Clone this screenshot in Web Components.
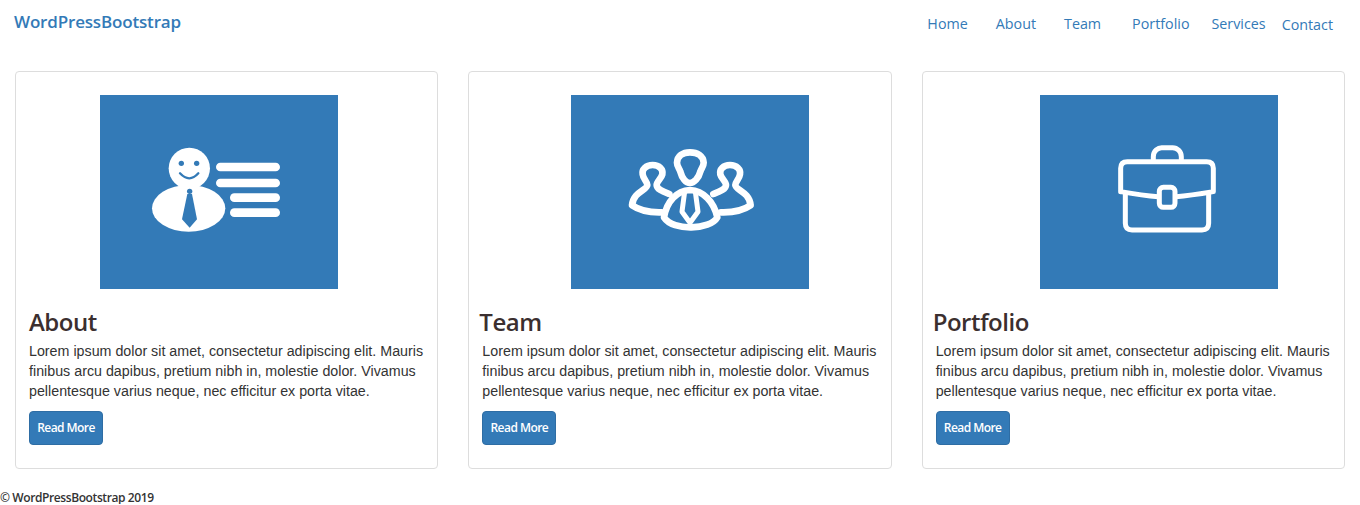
<!DOCTYPE html>
<html lang="en">
<head>
<meta charset="utf-8">
<title>WordPressBootstrap</title>
<style>
  html, body { margin: 0; padding: 0; background: #fff; overflow: hidden; }
  body { font-family: "Open Sans", "Liberation Sans", sans-serif; color: #333; }
  .cards {
    display: grid;
    grid-template-columns: repeat(3, 1fr);
    gap: 30px;
    padding: 0 15px;
  }
  svg { display: block; width: 238px; height: 194px; }
</style>
</head>
<body>
  <site-header brand="WordPressBootstrap">
    <nav-link style="--gap: 0">Home</nav-link>
    <nav-link style="--gap: 28px">About</nav-link>
    <nav-link style="--gap: 28px">Team</nav-link>
    <nav-link style="--gap: 31px">Portfolio</nav-link>
    <nav-link style="--gap: 22px">Services</nav-link>
    <nav-link style="--gap: 16px; --drop: 1px">Contact</nav-link>
  </site-header>

  <main class="cards">
    <info-card heading="About" style="--img-left: 84px; --title-left: 13px">
      <svg slot="icon" viewBox="0 0 238 194">
        <g transform="translate(30 35) scale(.3333)">
          <circle cx="178" cy="115" r="62" fill="#fff"/>
          <ellipse cx="176" cy="235" rx="110" ry="70" fill="#fff"/>
          <circle cx="154" cy="100" r="8" fill="#337ab7"/>
          <circle cx="200" cy="100" r="8" fill="#337ab7"/>
          <path d="M150 130 Q178 160 205 130" fill="none" stroke="#337ab7" stroke-width="7" stroke-linecap="round"/>
          <circle cx="179" cy="184" r="8" fill="#337ab7"/>
          <path d="M172 192 H186 L201 268 L179 293 L156 268 Z" fill="#337ab7"/>
          <rect x="258" y="98" width="192" height="26" rx="13" fill="#fff"/>
          <rect x="258" y="146" width="192" height="26" rx="13" fill="#fff"/>
          <rect x="300" y="190" width="150" height="26" rx="13" fill="#fff"/>
          <rect x="300" y="235" width="150" height="26" rx="13" fill="#fff"/>
        </g>
      </svg>
      Lorem ipsum dolor sit amet, consectetur adipiscing elit. Mauris finibus arcu dapibus, pretium nibh in, molestie dolor. Vivamus pellentesque varius neque, nec efficitur ex porta vitae.
    </info-card>

    <info-card heading="Team" style="--img-left: 102px; --title-left: 10px">
      <svg slot="icon" viewBox="0 0 238 194">
        <g transform="translate(39 35) scale(.3333)" fill="none" stroke="#fff" stroke-width="20" stroke-linejoin="round" stroke-linecap="round">
          <path d="M178 192 C160 185 140 178 140 165 C140 155 154 145 157 133 C160 118 148 105 128 105 C108 105 95 118 98 133 C100 148 112 155 112 165 C112 180 70 185 66 226 C90 243 120 248 155 247"/>
          <path d="M178 192 C160 185 140 178 140 165 C140 155 154 145 157 133 C160 118 148 105 128 105 C108 105 95 118 98 133 C100 148 112 155 112 165 C112 180 70 185 66 226 C90 243 120 248 155 247" transform="translate(488 0) scale(-1 1)"/>
          <path d="M240 67 C218 67 202 78 201 98 C201 110 209 116 211 125 C216 145 228 159 240 159 C252 159 266 145 271 125 C273 116 281 110 281 98 C280 78 262 67 240 67 Z"/>
          <path d="M162 262 C170 215 200 182 240 180 C280 182 312 215 322 262 C300 300 190 305 162 262 Z"/>
          <path d="M224 185 L216 245 L240 278 L264 245 L256 185" stroke-width="15"/>
        </g>
      </svg>
      Lorem ipsum dolor sit amet, consectetur adipiscing elit. Mauris finibus arcu dapibus, pretium nibh in, molestie dolor. Vivamus pellentesque varius neque, nec efficitur ex porta vitae.
    </info-card>

    <info-card heading="Portfolio" style="--img-left: 117px; --title-left: 10px">
      <svg slot="icon" viewBox="0 0 238 194">
        <g transform="translate(50 35) scale(.3333)" fill="none" stroke="#fff" stroke-width="15" stroke-linejoin="round" stroke-linecap="round">
          <path d="M190 88 V80 C190 62 205 53 215 53 H248 C262 53 274 65 274 80 V88"/>
          <path d="M92 185 V115 Q92 95 112 95 H350 Q370 95 370 115 V185 C330 192 290 198 258 200 M205 200 C170 198 130 192 92 185"/>
          <path d="M106 190 V280 Q106 300 126 300 H336 Q356 300 356 280 V190"/>
          <rect x="208" y="172" width="47" height="60" rx="12"/>
        </g>
      </svg>
      Lorem ipsum dolor sit amet, consectetur adipiscing elit. Mauris finibus arcu dapibus, pretium nibh in, molestie dolor. Vivamus pellentesque varius neque, nec efficitur ex porta vitae.
    </info-card>
  </main>

  <site-footer>© WordPressBootstrap 2019</site-footer>

<script>
// header bar with brand on the left, links on the right
class SiteHeader extends HTMLElement {
  constructor() {
    super();
    this.attachShadow({ mode: 'open' });
    this.shadowRoot.innerHTML = `
    <style>
      :host {
        display: flex;
        justify-content: space-between;
        height: 71px;
        padding: 0 27px 0 14px;
        box-sizing: border-box;
      }
      .brand {
        font-size: 17px;
        font-weight: 600;
        letter-spacing: -0.17px;
        line-height: 24px;
        margin-top: 10px;
        color: #337ab7;
        text-decoration: none;
      }
      nav {
        display: flex;
        align-items: flex-start;
        margin-top: 12px;
      }
    </style>
    <a class="brand" href="#"></a>
    <nav><slot></slot></nav>
    `;
  }

  connectedCallback() {
    this.shadowRoot.querySelector('.brand').textContent = this.getAttribute('brand');
  }
}

class NavLink extends HTMLElement {
  constructor() {
    super();
    this.attachShadow({ mode: 'open' });
    this.shadowRoot.innerHTML = `
    <style>
      :host {
        display: block;
        margin-left: var(--gap, 0);
        margin-top: var(--drop, 0);
      }
      a {
        font-size: 14.3px;
        line-height: 20px;
        color: #337ab7;
        text-decoration: none;
      }
    </style>
    <a href="#"><slot></slot></a>
    `;
  }
}

class InfoCard extends HTMLElement {
  constructor() {
    super();
    this.attachShadow({ mode: 'open' });
    this.shadowRoot.innerHTML = `
    <style>
      :host {
        display: block;
        height: 398px;
        box-sizing: border-box;
        border: 1px solid #ddd;
        border-radius: 4px;
        padding: 23px 8px 0 13px;
      }
      .image {
        width: 238px;
        height: 194px;
        margin-left: calc(var(--img-left, 0px) - 13px);
        background: #337ab7;
      }
      h2 {
        margin: 15px 0 0 calc(var(--title-left, 13px) - 13px);
        font-size: 24px;
        font-weight: 600;
        letter-spacing: -0.5px;
        line-height: 36px;
        color: #3b2f2f;
      }
      p {
        margin: 1px 0 0;
        font: 14.28px/20px "Liberation Sans", Arial, sans-serif;
        color: #333;
      }
      a {
        display: inline-block;
        box-sizing: border-box;
        width: 74px;
        height: 34px;
        margin-top: 10px;
        border: 1px solid #2e6da4;
        border-radius: 4px;
        background: #337ab7;
        color: #fff;
        font-size: 12px;
        font-weight: 600;
        letter-spacing: -0.55px;
        line-height: 32px;
        text-align: center;
        text-decoration: none;
      }
    </style>
    <div class="image"><slot name="icon"></slot></div>
    <h2></h2>
    <p><slot></slot></p>
    <a href="#">Read More</a>
    `;
  }

  connectedCallback() {
    this.shadowRoot.querySelector('h2').textContent = this.getAttribute('heading');
  }
}

class SiteFooter extends HTMLElement {
  constructor() {
    super();
    this.attachShadow({ mode: 'open' });
    this.shadowRoot.innerHTML = `
    <style>
      :host {
        display: block;
        margin-top: 23px;
        font-size: 12px;
        font-weight: 600;
        letter-spacing: -0.4px;
        line-height: 12px;
        color: #333;
      }
    </style>
    <slot></slot>
    `;
  }
}

customElements.define('site-header', SiteHeader);
customElements.define('nav-link', NavLink);
customElements.define('info-card', InfoCard);
customElements.define('site-footer', SiteFooter);
</script>
</body>
</html>
